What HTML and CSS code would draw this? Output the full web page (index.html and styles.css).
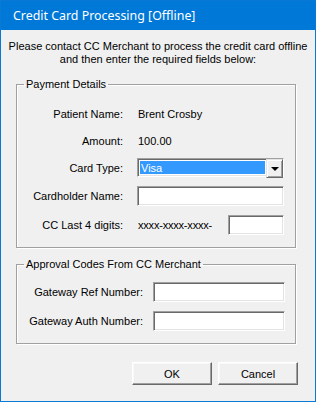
FILE: index.html
```html
<!DOCTYPE html>
<html>
<head>
<meta charset="utf-8">
<link rel="stylesheet" href="styles.css">
</head>
<body>
<div class="window">
  <div class="titlebar">Credit Card Processing [Offline]</div>
  <div class="content">
    <p class="intro">Please contact CC Merchant to process the credit card offline<br>and then enter the required fields below:</p>
    <fieldset class="group group-payment">
      <legend>Payment Details</legend>
      <div class="form form-payment">
        <div class="label">Patient Name:</div>
        <div class="value">Brent Crosby</div>
        <div class="label">Amount:</div>
        <div class="value">100.00</div>
        <div class="label">Card Type:</div>
        <div class="combo">
          <span class="combo-sel">Visa</span>
          <span class="combo-btn"><span class="arrow"></span></span>
        </div>
        <div class="label">Cardholder Name:</div>
        <div class="input"></div>
        <div class="label">CC Last 4 digits:</div>
        <div class="cc">
          <span class="mask">xxxx-xxxx-xxxx-</span>
          <div class="input input-small"></div>
        </div>
      </div>
    </fieldset>
    <fieldset class="group group-approval">
      <legend>Approval Codes From CC Merchant</legend>
      <div class="form form-approval">
        <div class="label">Gateway Ref Number:</div>
        <div class="input"></div>
        <div class="label">Gateway Auth Number:</div>
        <div class="input"></div>
      </div>
    </fieldset>
    <div class="buttons">
      <div class="button">OK</div>
      <div class="button">Cancel</div>
    </div>
  </div>
</div>
</body>
</html>
```
FILE: styles.css
```css
* { box-sizing: border-box; }
body {
  margin: 0;
  background: #ffffff;
  font-family: "Liberation Sans", Arial, sans-serif;
  font-size: 11px;
  color: #000;
}
.window {
  width: 316px;
  height: 402px;
  border: 1px solid #0a79d4;
  background: #f0f0f0;
  display: flex;
  flex-direction: column;
}
.titlebar {
  height: 29px;
  flex: none;
  background: #0078d7;
  color: #fff;
  font-family: "Noto Sans", "Open Sans", sans-serif;
  font-size: 12.4px;
  display: flex;
  align-items: center;
  padding-left: 12px;
  padding-bottom: 1px;
}
.content {
  flex: 1;
  padding-top: 10px;
  display: flex;
  flex-direction: column;
}
.intro {
  margin: 0;
  text-align: center;
  line-height: 13px;
}
.group {
  margin: 12px 19px 0 15px;
  width: 280px;
  border: 1px solid #a0a0a0;
  box-shadow: 1px 1px 0 #fff, inset 1px 1px 0 #fff;
  padding: 13px 0 12px 0;
  min-width: 0;
}
.group legend {
  margin-left: 7px;
  padding: 0 2px;
  line-height: 13px;
}
.group-approval {
  margin-top: 10px;
  padding-top: 11px;
}
.form {
  display: grid;
  align-items: start;
}
.form-payment {
  grid-template-columns: 106px 147px;
  grid-template-rows: 27px 27px 28px 29px 20px;
  column-gap: 14px;
}
.form-approval {
  grid-template-columns: 126px 132px;
  grid-template-rows: 29px 20px;
  column-gap: 10px;
}
.label {
  height: 20px;
  display: flex;
  align-items: center;
  justify-content: flex-end;
  white-space: nowrap;
}
.value {
  height: 20px;
  display: flex;
  align-items: center;
  padding-left: 1px;
}
.input {
  height: 20px;
  background: #fff;
  border: 1px solid;
  border-color: #a0a0a0 #fff #fff #a0a0a0;
  box-shadow: inset 1px 1px 0 #696969, inset -1px -1px 0 #e3e3e3;
}
.input-small {
  width: 56px;
  margin-left: auto;
}
.cc {
  height: 20px;
  display: flex;
  align-items: center;
}
.mask {
  padding-left: 1px;
  letter-spacing: -0.2px;
}
.combo {
  height: 19px;
  background: #fff;
  border: 1px solid;
  border-color: #a0a0a0 #fff #fff #a0a0a0;
  box-shadow: inset 1px 1px 0 #696969, inset -1px -1px 0 #e3e3e3;
  padding: 2px 2px 2px 2px;
  display: flex;
}
.combo-sel {
  flex: 1;
  background: #3399ff;
  color: #fff;
  padding-left: 1px;
  display: flex;
  align-items: center;
  margin-right: 1px;
}
.combo-btn {
  width: 17px;
  background: #f0f0f0;
  border: 1px solid;
  border-color: #e3e3e3 #696969 #696969 #e3e3e3;
  box-shadow: inset 1px 1px 0 #fff, inset -1px -1px 0 #a0a0a0;
  display: flex;
  align-items: center;
  justify-content: center;
  margin: -2px -2px -2px 0;
  height: 19px;
}
.arrow {
  width: 0;
  height: 0;
  border-left: 4px solid transparent;
  border-right: 4px solid transparent;
  border-top: 4px solid #000;
  margin-top: 1px;
}
.buttons {
  display: flex;
  justify-content: flex-end;
  gap: 6px;
  margin-top: 18px;
  padding-right: 17px;
}
.button {
  width: 80px;
  height: 23px;
  background: #f0f0f0;
  border: 1px solid;
  border-color: #fff #696969 #696969 #fff;
  box-shadow: inset -1px -1px 0 #a0a0a0, inset 1px 1px 0 #f8f8f8;
  display: flex;
  align-items: center;
  justify-content: center;
}
```
